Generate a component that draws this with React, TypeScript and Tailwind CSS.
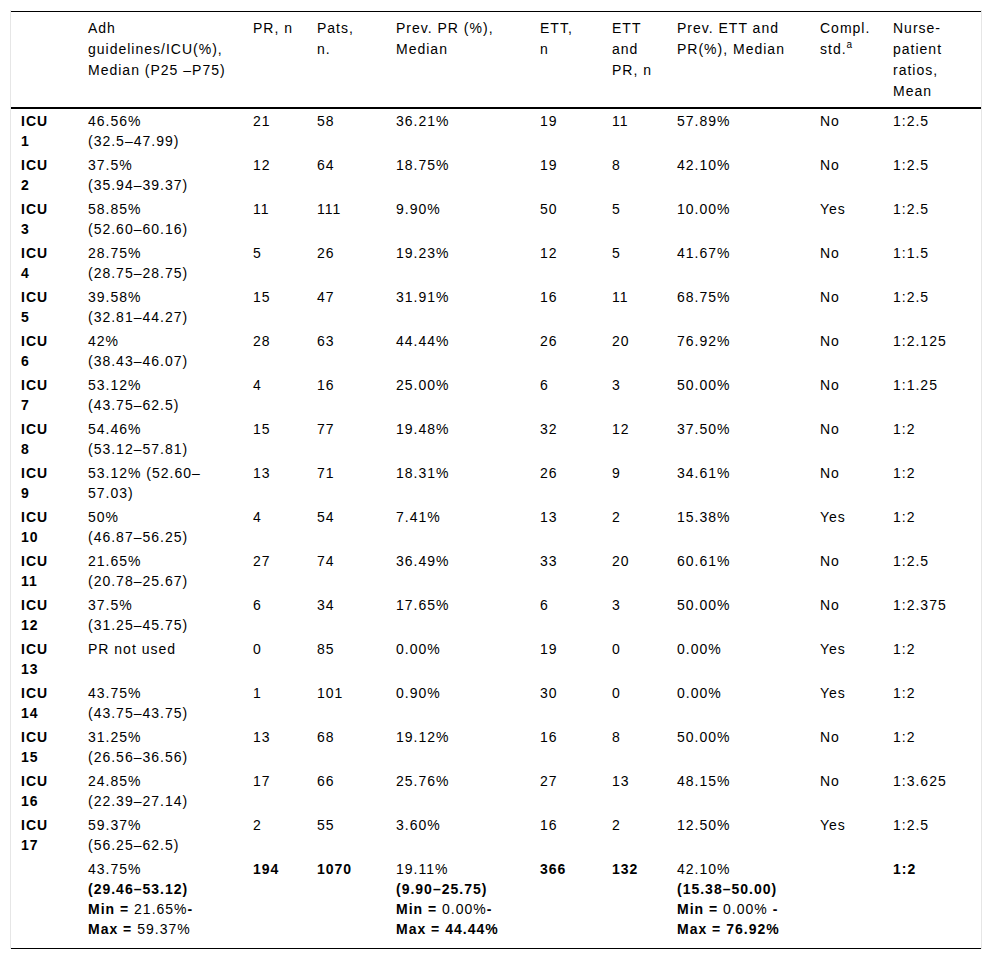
import React from "react";

type Row = {
  icu: string;
  adh: [string, string];
  pr: string;
  pats: string;
  prevPr: string;
  ett: string;
  ettPr: string;
  prevEtt: string;
  compl: string;
  ratio: string;
};

const rows: Row[] = [
  { icu: "1", adh: ["46.56%", "(32.5–47.99)"], pr: "21", pats: "58", prevPr: "36.21%", ett: "19", ettPr: "11", prevEtt: "57.89%", compl: "No", ratio: "1:2.5" },
  { icu: "2", adh: ["37.5%", "(35.94–39.37)"], pr: "12", pats: "64", prevPr: "18.75%", ett: "19", ettPr: "8", prevEtt: "42.10%", compl: "No", ratio: "1:2.5" },
  { icu: "3", adh: ["58.85%", "(52.60–60.16)"], pr: "11", pats: "111", prevPr: "9.90%", ett: "50", ettPr: "5", prevEtt: "10.00%", compl: "Yes", ratio: "1:2.5" },
  { icu: "4", adh: ["28.75%", "(28.75–28.75)"], pr: "5", pats: "26", prevPr: "19.23%", ett: "12", ettPr: "5", prevEtt: "41.67%", compl: "No", ratio: "1:1.5" },
  { icu: "5", adh: ["39.58%", "(32.81–44.27)"], pr: "15", pats: "47", prevPr: "31.91%", ett: "16", ettPr: "11", prevEtt: "68.75%", compl: "No", ratio: "1:2.5" },
  { icu: "6", adh: ["42%", "(38.43–46.07)"], pr: "28", pats: "63", prevPr: "44.44%", ett: "26", ettPr: "20", prevEtt: "76.92%", compl: "No", ratio: "1:2.125" },
  { icu: "7", adh: ["53.12%", "(43.75–62.5)"], pr: "4", pats: "16", prevPr: "25.00%", ett: "6", ettPr: "3", prevEtt: "50.00%", compl: "No", ratio: "1:1.25" },
  { icu: "8", adh: ["54.46%", "(53.12–57.81)"], pr: "15", pats: "77", prevPr: "19.48%", ett: "32", ettPr: "12", prevEtt: "37.50%", compl: "No", ratio: "1:2" },
  { icu: "9", adh: ["53.12% (52.60–", "57.03)"], pr: "13", pats: "71", prevPr: "18.31%", ett: "26", ettPr: "9", prevEtt: "34.61%", compl: "No", ratio: "1:2" },
  { icu: "10", adh: ["50%", "(46.87–56.25)"], pr: "4", pats: "54", prevPr: "7.41%", ett: "13", ettPr: "2", prevEtt: "15.38%", compl: "Yes", ratio: "1:2" },
  { icu: "11", adh: ["21.65%", "(20.78–25.67)"], pr: "27", pats: "74", prevPr: "36.49%", ett: "33", ettPr: "20", prevEtt: "60.61%", compl: "No", ratio: "1:2.5" },
  { icu: "12", adh: ["37.5%", "(31.25–45.75)"], pr: "6", pats: "34", prevPr: "17.65%", ett: "6", ettPr: "3", prevEtt: "50.00%", compl: "No", ratio: "1:2.375" },
  { icu: "13", adh: ["PR not used", ""], pr: "0", pats: "85", prevPr: "0.00%", ett: "19", ettPr: "0", prevEtt: "0.00%", compl: "Yes", ratio: "1:2" },
  { icu: "14", adh: ["43.75%", "(43.75–43.75)"], pr: "1", pats: "101", prevPr: "0.90%", ett: "30", ettPr: "0", prevEtt: "0.00%", compl: "Yes", ratio: "1:2" },
  { icu: "15", adh: ["31.25%", "(26.56–36.56)"], pr: "13", pats: "68", prevPr: "19.12%", ett: "16", ettPr: "8", prevEtt: "50.00%", compl: "No", ratio: "1:2" },
  { icu: "16", adh: ["24.85%", "(22.39–27.14)"], pr: "17", pats: "66", prevPr: "25.76%", ett: "27", ettPr: "13", prevEtt: "48.15%", compl: "No", ratio: "1:3.625" },
  { icu: "17", adh: ["59.37%", "(56.25–62.5)"], pr: "2", pats: "55", prevPr: "3.60%", ett: "16", ettPr: "2", prevEtt: "12.50%", compl: "Yes", ratio: "1:2.5" },
];

// thick rule under the header sits on the header cells
const th =
  "border-b-2 border-black pl-[10px] pt-[6px] pb-[5px] text-left align-top font-normal leading-[21px] whitespace-nowrap";
const td = "pl-[10px] py-[2px] align-top leading-[20px] whitespace-nowrap";
const tdLast = "pl-[10px] pt-[2px] pb-[9px] align-top leading-[20px] whitespace-nowrap";

export default function App() {
  return (
    <div className="min-h-screen bg-white pt-[10px] pl-[10px]">
      <div className="w-[972px] border-x border-[#e6e6e6] pt-[1px]">
        <table
          className="w-[970px] table-fixed border-separate border-spacing-0 border-y border-black text-[14px] tracking-[1px] text-black"
          style={{ fontFamily: '"Liberation Sans", Arial, sans-serif' }}
        >
          <colgroup>
            <col className="w-[67px]" />
            <col className="w-[165px]" />
            <col className="w-[64px]" />
            <col className="w-[79px]" />
            <col className="w-[144px]" />
            <col className="w-[72px]" />
            <col className="w-[65px]" />
            <col className="w-[143px]" />
            <col className="w-[73px]" />
            <col className="w-[98px]" />
          </colgroup>
          <thead>
            <tr>
              <th className={th}></th>
              <th className={th}>Adh<br />guidelines/ICU(%),<br />Median (P25 –P75)</th>
              <th className={th}>PR, n</th>
              <th className={th}>Pats,<br />n.</th>
              <th className={th}>Prev. PR (%),<br />Median</th>
              <th className={th}>ETT,<br />n</th>
              <th className={th}>ETT<br />and<br />PR, n</th>
              <th className={th}>Prev. ETT and<br />PR(%), Median</th>
              <th className={th}>
                Compl.<br />std.
                <span className="relative -top-[6px] text-[10px] tracking-normal leading-none">a</span>
              </th>
              <th className={th}>Nurse-<br />patient<br />ratios,<br />Mean</th>
            </tr>
          </thead>
          <tbody>
            {rows.map((r) => (
              <tr key={r.icu}>
                <td className={`${td} font-bold`}>ICU<br />{r.icu}</td>
                <td className={td}>{r.adh[0]}{r.adh[1] && <><br />{r.adh[1]}</>}</td>
                <td className={td}>{r.pr}</td>
                <td className={td}>{r.pats}</td>
                <td className={td}>{r.prevPr}</td>
                <td className={td}>{r.ett}</td>
                <td className={td}>{r.ettPr}</td>
                <td className={td}>{r.prevEtt}</td>
                <td className={td}>{r.compl}</td>
                <td className={td}>{r.ratio}</td>
              </tr>
            ))}
            <tr>
              <td className={tdLast}></td>
              <td className={tdLast}>
                43.75%<br />
                <b>(29.46–53.12)</b><br />
                <b>Min =</b> 21.65%<b>-</b><br />
                <b>Max =</b> 59.37%
              </td>
              <td className={`${tdLast} font-bold`}>194</td>
              <td className={`${tdLast} font-bold`}>1070</td>
              <td className={tdLast}>
                19.11%<br />
                <b>(9.90–25.75)</b><br />
                <b>Min =</b> 0.00%<b>-</b><br />
                <b>Max = 44.44%</b>
              </td>
              <td className={`${tdLast} font-bold`}>366</td>
              <td className={`${tdLast} font-bold`}>132</td>
              <td className={tdLast}>
                42.10%<br />
                <b>(15.38–50.00)</b><br />
                <b>Min =</b> 0.00% <b>-</b><br />
                <b>Max = 76.92%</b>
              </td>
              <td className={tdLast}></td>
              <td className={`${tdLast} font-bold`}>1:2</td>
            </tr>
          </tbody>
        </table>
      </div>
    </div>
  );
}
